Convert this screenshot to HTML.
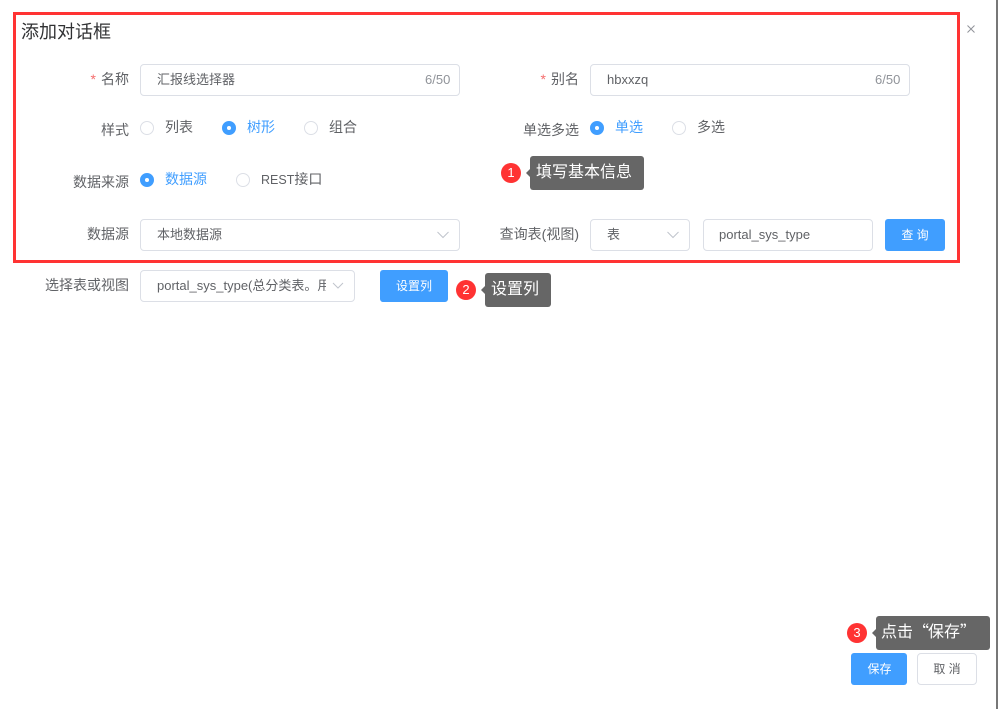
<!DOCTYPE html>
<html lang="zh">
<head>
<meta charset="utf-8">
<style>
html,body{margin:0;padding:0;width:998px;height:709px;overflow:hidden;background:#fff}
body{position:relative;font-family:"Liberation Sans","Noto Sans CJK SC",sans-serif;font-size:13px;color:#606266}
.a{position:absolute;white-space:nowrap}
.l{position:absolute;white-space:nowrap;text-align:right;line-height:20px;height:20px;font-size:14px}
.l i{font-style:normal;color:#f56c6c;margin-right:5px;font-size:14px}
.box{position:absolute;box-sizing:border-box;border:1px solid #dcdfe6;border-radius:4px;background:#fff;line-height:29px;padding-left:16px;white-space:nowrap;overflow:hidden}
.cnt{position:absolute;color:#909399;font-size:13px;line-height:20px;white-space:nowrap}
.r{position:absolute;box-sizing:border-box;width:14px;height:14px;border:1px solid #dcdfe6;border-radius:50%;background:#fff}
.r.on{background:#409eff;border-color:#409eff}
.r.on:after{content:"";position:absolute;left:4px;top:4px;width:4px;height:4px;border-radius:50%;background:#fff}
.t{position:absolute;white-space:nowrap;line-height:20px;font-size:14px}
.t.on{color:#409eff}
.btn{position:absolute;box-sizing:border-box;background:#409eff;color:#fff;border-radius:3px;text-align:center;font-size:12px;white-space:nowrap}
.tip{position:absolute;background:#666;color:#fff;border-radius:3px;font-size:16px;text-align:left;padding-left:6px;box-sizing:border-box;white-space:nowrap}
.tip:before{content:"";position:absolute;left:-4px;top:50%;margin-top:-4px;border:4px solid transparent;border-left:0;border-right-color:#666}
.q{font-family:"Noto Sans CJK SC",sans-serif;line-height:0}
.n{position:absolute;width:20px;height:20px;border-radius:50%;background:#ff3333;color:#fff;font-size:13px;line-height:20px;text-align:center}
svg{position:absolute;display:block}
</style>
</head>
<body>
<div class="a" style="left:996px;top:0;width:2px;height:709px;background:#777"></div>
<div class="a" style="left:13px;top:12px;width:947px;height:251px;box-sizing:border-box;border:3px solid #ff3333"></div>

<div class="a" style="left:21px;top:20px;font-size:18px;line-height:24px;color:#303133">添加对话框</div>
<svg style="left:967px;top:25px" width="8" height="8" viewBox="0 0 8 8"><path d="M.5.5l7 7M7.500.5l-7 7" stroke="#909399" stroke-width="1" fill="none"/></svg>

<div class="l" style="right:869px;top:69px"><i>*</i>名称</div>
<div class="box" style="left:140px;top:64px;width:320px;height:32px">汇报线选择器</div>
<div class="cnt" style="left:425px;top:70px">6/50</div>

<div class="l" style="right:419px;top:69px"><i>*</i>别名</div>
<div class="box" style="left:590px;top:64px;width:320px;height:32px">hbxxzq</div>
<div class="cnt" style="left:875px;top:70px">6/50</div>

<div class="l" style="right:869px;top:120px">样式</div>
<div class="r" style="left:140px;top:121px"></div><div class="t" style="left:165px;top:117px">列表</div>
<div class="r on" style="left:222px;top:121px"></div><div class="t on" style="left:247px;top:117px">树形</div>
<div class="r" style="left:304px;top:121px"></div><div class="t" style="left:329px;top:117px">组合</div>

<div class="l" style="right:419px;top:120px">单选多选</div>
<div class="r on" style="left:590px;top:121px"></div><div class="t on" style="left:615px;top:117px">单选</div>
<div class="r" style="left:672px;top:121px"></div><div class="t" style="left:697px;top:117px">多选</div>

<div class="l" style="right:869px;top:172px">数据来源</div>
<div class="r on" style="left:140px;top:173px"></div><div class="t on" style="left:165px;top:169px">数据源</div>
<div class="r" style="left:236px;top:173px"></div><div class="t" style="left:261px;top:169px"><span style="font-size:12.5px">REST</span>接口</div>

<div class="l" style="right:869px;top:224px">数据源</div>
<div class="box" style="left:140px;top:219px;width:320px;height:32px">本地数据源</div>
<svg style="left:437px;top:231px" width="12" height="8" viewBox="0 0 12 8"><path d="M.5 1l5.500 5.500L11.500 1" stroke="#c0c4cc" stroke-width="1" fill="none"/></svg>

<div class="l" style="right:419px;top:224px">查询表(视图)</div>
<div class="box" style="left:590px;top:219px;width:100px;height:32px">表</div>
<svg style="left:667px;top:231px" width="12" height="8" viewBox="0 0 12 8"><path d="M.5 1l5.500 5.500L11.500 1" stroke="#c0c4cc" stroke-width="1" fill="none"/></svg>
<div class="box" style="left:703px;top:219px;width:170px;height:32px;padding-left:15px;line-height:30px">portal_sys_type</div>
<div class="btn" style="left:885px;top:219px;width:60px;height:32px;line-height:32px">查 询</div>

<div class="l" style="right:869px;top:275px">选择表或视图</div>
<div class="box" style="left:140px;top:270px;width:215px;height:32px;line-height:30px"><span style="display:block;width:169px;overflow:hidden">portal_sys_type(总分类表。用于存放</span></div>
<svg style="left:332px;top:282px" width="12" height="8" viewBox="0 0 12 8"><path d="M1 1l5 5 5-5" stroke="#c0c4cc" stroke-width="1" fill="none"/></svg>
<div class="btn" style="left:380px;top:270px;width:68px;height:32px;line-height:32px">设置列</div>

<div class="n" style="left:501px;top:163px">1</div>
<div class="tip" style="left:530px;top:156px;width:114px;height:34px;line-height:33px">填写基本信息</div>

<div class="n" style="left:456px;top:280px">2</div>
<div class="tip" style="left:485px;top:273px;width:66px;height:34px;line-height:33px">设置列</div>

<div class="n" style="left:847px;top:623px">3</div>
<div class="tip" style="left:876px;top:616px;width:114px;height:34px;line-height:33px;padding-left:5px">点击<span class="q" style="letter-spacing:-1px">“</span>保存<span class="q">”</span></div>

<div class="btn" style="left:851px;top:653px;width:56px;height:32px;line-height:32px;padding-left:1px">保存</div>
<div class="box" style="left:917px;top:653px;width:60px;height:32px;padding:0;text-align:center;font-size:12px;line-height:30px">取 消</div>
</body>
</html>
